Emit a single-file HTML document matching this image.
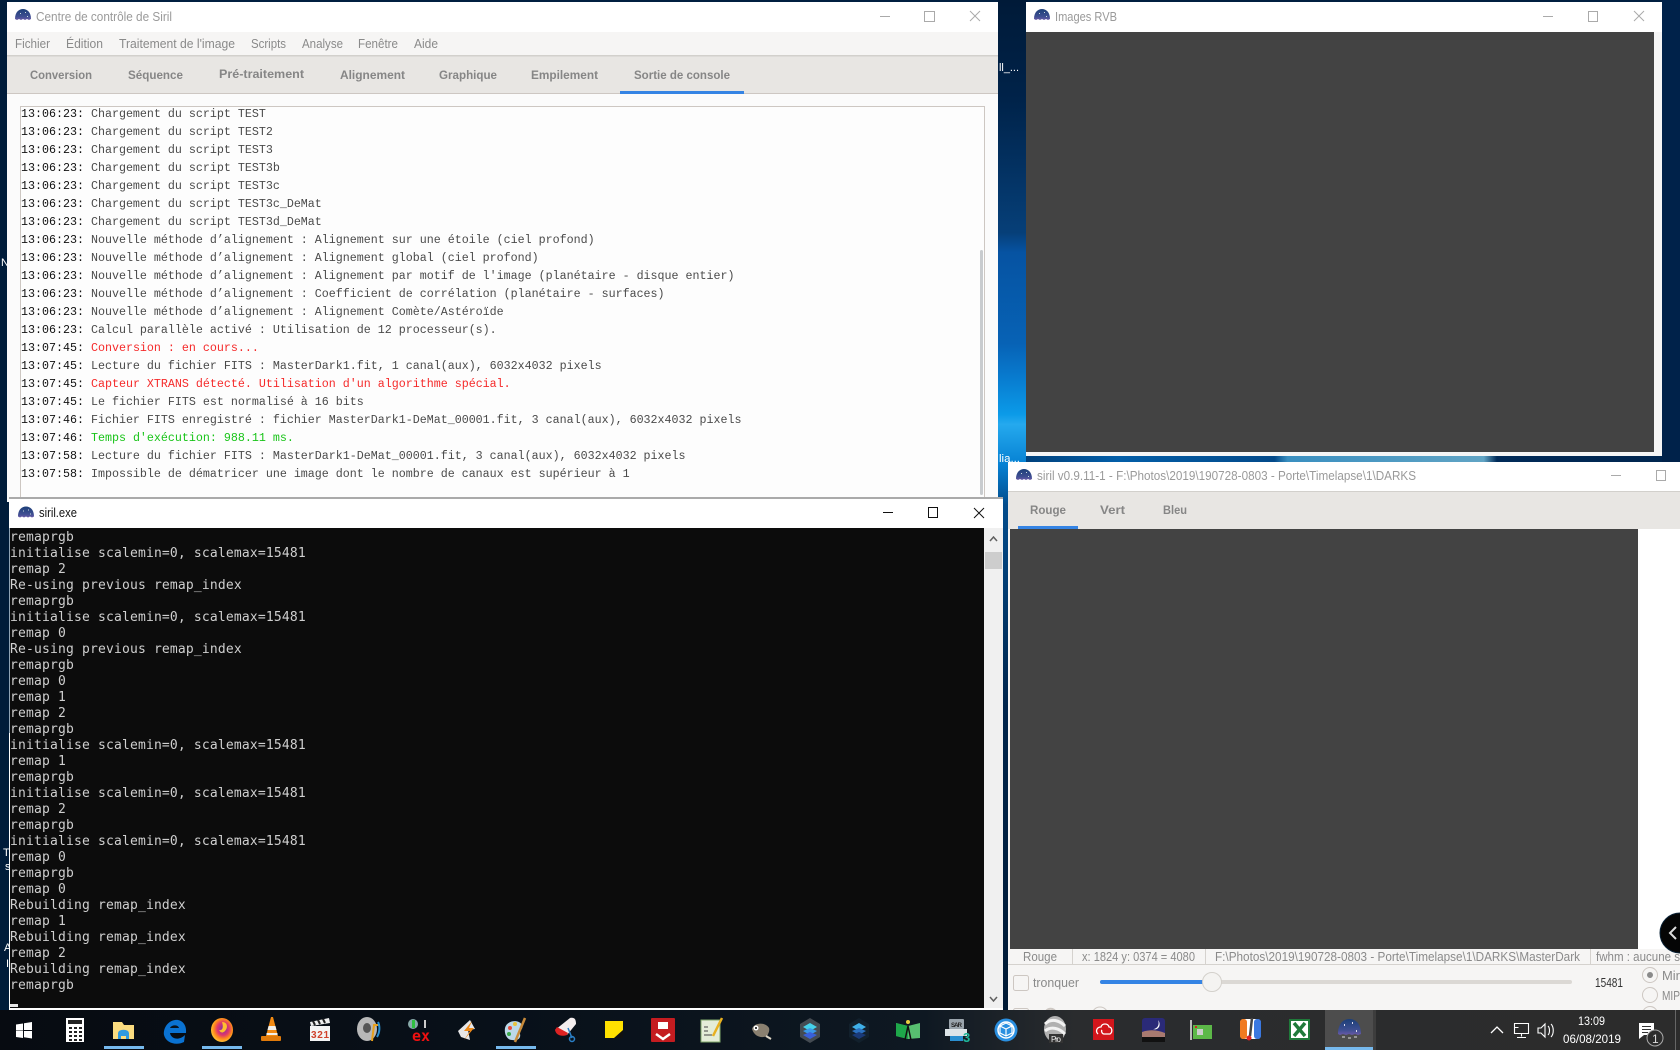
<!DOCTYPE html>
<html lang="fr"><head><meta charset="utf-8"><title>Siril</title>
<style>
html,body{margin:0;padding:0;background:#001a35;overflow:hidden}
body{width:1680px;height:1050px;position:relative}
svg{position:absolute;left:0;top:0;display:block}
text{font-family:"Liberation Sans",sans-serif;font-size:12.5px;fill:#8f8f8f}
.tab{font-weight:bold;font-size:12px;fill:#868686}
.men{font-size:12.5px;fill:#8a8a8a}
.ttl{font-size:12.5px;fill:#9a9a9a}
.st{font-size:12.5px;fill:#8a8a8a}
.tray{font-size:12px;fill:#fff}
.dk{font-size:11px;fill:#fff}
pre{position:absolute;margin:0;white-space:pre}
#log{left:21px;top:105px;font:11.67px/18px "Liberation Mono",monospace;color:#4a4a4a}
#log b{font-weight:normal;color:#111}
#log i{font-style:normal;color:#f52a2a}
#log u{text-decoration:none;color:#19c419}
#con{left:10px;top:530px;font:13px/16px "DejaVu Sans Mono",monospace;letter-spacing:.17px;color:#cfcfcf}
</style></head><body>
<svg width="1680" height="1050" viewBox="0 0 1680 1050" xmlns="http://www.w3.org/2000/svg">
<defs>
<linearGradient id="sky" x1="0" y1="0" x2="0" y2="1">
<stop offset="0" stop-color="#001a38"/><stop offset=".1" stop-color="#00234a"/><stop offset=".23" stop-color="#063f78"/><stop offset=".25" stop-color="#0653a2"/><stop offset=".34" stop-color="#0762b5"/><stop offset=".37" stop-color="#0878cc"/><stop offset=".41" stop-color="#0b9ae8"/><stop offset=".42" stop-color="#25a9ee"/><stop offset=".46" stop-color="#0681d3"/><stop offset=".5" stop-color="#024c8c"/><stop offset=".7" stop-color="#00254c"/><stop offset="1" stop-color="#001a35"/>
</linearGradient>
<linearGradient id="band" x1="0" y1="0" x2="1" y2="0">
<stop offset="0" stop-color="#00417c"/><stop offset=".14" stop-color="#035ea8"/><stop offset=".38" stop-color="#034a8a"/><stop offset=".4" stop-color="#3a8fc0"/><stop offset=".7" stop-color="#61a4c4"/><stop offset=".72" stop-color="#002a58"/><stop offset="1" stop-color="#00254e"/>
</linearGradient>
<linearGradient id="bar" x1="0" y1="0" x2="1" y2="0">
<stop offset="0" stop-color="#070b11"/><stop offset=".3" stop-color="#081019"/><stop offset=".55" stop-color="#0e1822"/><stop offset=".64" stop-color="#2a2c2e"/><stop offset="1" stop-color="#2c2c2c"/>
</linearGradient>
<linearGradient id="dome" x1="0" y1="0" x2="0" y2="1">
<stop offset="0" stop-color="#1c3f78"/><stop offset=".7" stop-color="#3f4f92"/><stop offset="1" stop-color="#6a5aa8"/>
</linearGradient>
<radialGradient id="ff" cx=".55" cy=".45" r=".6">
<stop offset="0" stop-color="#7a2fa8"/><stop offset=".45" stop-color="#e0386a"/><stop offset=".7" stop-color="#ff8a1c"/><stop offset="1" stop-color="#ffd23a"/>
</radialGradient>
<symbol id="sr" viewBox="0 0 16 12" overflow="visible">
<path d="M0 10C0 3 4 0 8 0s8 3 8 10l-2 1-2-1-2 1-2-1-2 1-2-1-2 1z" fill="url(#dome)"/>
<rect x="5" y="4" width="1" height="1" fill="#cdd"/><rect x="10" y="3" width="1" height="1" fill="#cdd"/><rect x="12" y="7" width="1" height="1" fill="#cdd"/>
</symbol>
</defs>

<!-- desktop -->
<rect width="1680" height="1050" fill="#001f40"/>
<rect x="998" y="0" width="30" height="1010" fill="url(#sky)"/>
<rect x="1026" y="456" width="654" height="6" fill="url(#band)"/>
<rect x="1662" y="0" width="18" height="462" fill="#00224a"/>
<rect x="0" y="0" width="9" height="1010" fill="#001c3a"/>
<text class="dk" x="999" y="71" textLength="20" lengthAdjust="spacingAndGlyphs">ll_...</text>
<text class="dk" x="999" y="462" textLength="21" lengthAdjust="spacingAndGlyphs">lia...</text>
<text class="dk" x="1" y="266">N</text><text class="dk" x="3" y="856">T</text><text class="dk" x="5" y="870">s</text><text class="dk" x="4" y="951">A</text><text class="dk" x="6" y="967">I</text>

<!-- main window -->
<rect x="7" y="2" width="991" height="500" fill="#fbfbfb"/>
<rect x="7" y="2" width="991" height="30" fill="#fff"/>
<use href="#sr" x="15" y="9" width="16" height="12"/>
<text class="ttl" x="36" y="21" textLength="136" lengthAdjust="spacingAndGlyphs">Centre de contrôle de Siril</text>
<path d="M880 16.5h10" stroke="#aaa" stroke-width="1"/>
<rect x="924.500" y="11.500" width="10" height="10" fill="none" stroke="#aaa"/>
<path d="M970 11l10 10M980 11l-10 10" stroke="#aaa"/>
<rect x="7" y="32" width="991" height="23" fill="#f6f5f4"/>
<text class="men" x="15" y="48" textLength="35" lengthAdjust="spacingAndGlyphs">Fichier</text>
<text class="men" x="66" y="48" textLength="37" lengthAdjust="spacingAndGlyphs">Édition</text>
<text class="men" x="119" y="48" textLength="116" lengthAdjust="spacingAndGlyphs">Traitement de l'image</text>
<text class="men" x="251" y="48" textLength="35" lengthAdjust="spacingAndGlyphs">Scripts</text>
<text class="men" x="302" y="48" textLength="41" lengthAdjust="spacingAndGlyphs">Analyse</text>
<text class="men" x="358" y="48" textLength="40" lengthAdjust="spacingAndGlyphs">Fenêtre</text>
<text class="men" x="414" y="48" textLength="24" lengthAdjust="spacingAndGlyphs">Aide</text>
<rect x="7" y="55" width="991" height="39" fill="#e8e6e3"/>
<rect x="7" y="55" width="991" height="1.500" fill="#d2d0cc"/>
<rect x="7" y="93" width="991" height="1" fill="#cdc7c2"/>
<rect x="620" y="91" width="124" height="3" fill="#3584e4"/>
<text class="tab" x="30" y="79" textLength="62" lengthAdjust="spacingAndGlyphs">Conversion</text>
<text class="tab" x="128" y="79" textLength="55" lengthAdjust="spacingAndGlyphs">Séquence</text>
<text class="tab" x="219" y="78" textLength="85" lengthAdjust="spacingAndGlyphs">Pré-traitement</text>
<text class="tab" x="340" y="79" textLength="65" lengthAdjust="spacingAndGlyphs">Alignement</text>
<text class="tab" x="439" y="79" textLength="58" lengthAdjust="spacingAndGlyphs">Graphique</text>
<text class="tab" x="531" y="79" textLength="67" lengthAdjust="spacingAndGlyphs">Empilement</text>
<text class="tab" x="634" y="79" textLength="96" lengthAdjust="spacingAndGlyphs">Sortie de console</text>
<rect x="20.500" y="106.500" width="964" height="400" fill="#fdfdfd" stroke="#cdc7c2"/>
<rect x="980" y="250" width="3" height="245" rx="1.500" fill="#c8cbce"/>

<!-- RGB window -->
<rect x="1026" y="2" width="636" height="454" fill="#f5f5f5"/>
<rect x="1026" y="2" width="636" height="30" fill="#fff"/>
<use href="#sr" x="1034" y="9" width="16" height="12"/>
<text class="ttl" x="1055" y="21" textLength="62" lengthAdjust="spacingAndGlyphs">Images RVB</text>
<path d="M1543 16.500h10" stroke="#aaa"/>
<rect x="1588.500" y="11.500" width="9" height="10" fill="none" stroke="#aaa"/>
<path d="M1634 11l10 10M1644 11l-10 10" stroke="#aaa"/>
<rect x="1026" y="32" width="628" height="420" fill="#434343"/>

<!-- siril window -->
<rect x="1008" y="462" width="672" height="548" fill="#f6f5f4"/>
<rect x="1008" y="462" width="672" height="29" fill="#fff"/>
<use href="#sr" x="1016" y="469" width="16" height="12"/>
<text class="ttl" x="1037" y="480" textLength="379" lengthAdjust="spacingAndGlyphs">siril v0.9.11-1 - F:\Photos\2019\190728-0803 - Porte\Timelapse\1\DARKS</text>
<path d="M1611 475.500h10" stroke="#aaa"/>
<rect x="1656.500" y="470.500" width="9" height="10" fill="none" stroke="#aaa"/>
<rect x="1008" y="491" width="672" height="38" fill="#e8e6e3"/>
<rect x="1008" y="491" width="672" height="1" fill="#d2d0cc"/>
<rect x="1638" y="529" width="42" height="420" fill="#fff"/>
<rect x="1018" y="526" width="60" height="3" fill="#3584e4"/>
<text class="tab" x="1030" y="514" textLength="36" lengthAdjust="spacingAndGlyphs">Rouge</text>
<text class="tab" x="1100" y="514" textLength="25" lengthAdjust="spacingAndGlyphs">Vert</text>
<text class="tab" x="1163" y="514" textLength="24" lengthAdjust="spacingAndGlyphs">Bleu</text>
<rect x="1010" y="529" width="628" height="420" fill="#434343"/>
<rect x="1008" y="964" width="672" height="1" fill="#d5d2ce"/>
<path d="M1072.500 949v15M1205.500 949v15M1590.500 949v15" stroke="#d5d2ce"/>
<text class="st" x="1023" y="961" textLength="34" lengthAdjust="spacingAndGlyphs">Rouge</text>
<text class="st" x="1082" y="961" textLength="113" lengthAdjust="spacingAndGlyphs">x: 1824 y: 0374 = 4080</text>
<text class="st" x="1215" y="961" textLength="365" lengthAdjust="spacingAndGlyphs">F:\Photos\2019\190728-0803 - Porte\Timelapse\1\DARKS\MasterDark</text>
<text class="st" x="1596" y="961" textLength="84" lengthAdjust="spacingAndGlyphs">fwhm : aucune s</text>
<rect x="1013.500" y="975.500" width="15" height="15" rx="2" fill="#f6f5f4" stroke="#cdc7c2"/>
<text class="st" x="1033" y="987" textLength="46" lengthAdjust="spacingAndGlyphs">tronquer</text>
<rect x="1100" y="980" width="472" height="4" rx="2" fill="#dbd8d4"/>
<rect x="1100" y="980" width="110" height="4" rx="2" fill="#3584e4"/>
<circle cx="1212" cy="982" r="9.500" fill="#f4f3f1" stroke="#d3d0cb"/>
<text x="1595" y="987" textLength="28" lengthAdjust="spacingAndGlyphs" style="fill:#333;font-size:12.5px">15481</text>
<circle cx="1650" cy="975" r="7.500" fill="#f6f5f4" stroke="#cdc7c2"/><circle cx="1650" cy="975" r="3" fill="#8a8a8a"/>
<circle cx="1650" cy="995" r="7.500" fill="#f6f5f4" stroke="#cdc7c2"/>
<circle cx="1650" cy="1014" r="7.500" fill="#f6f5f4" stroke="#cdc7c2"/>
<text class="st" x="1662" y="980" textLength="18" lengthAdjust="spacingAndGlyphs">Mir</text>
<text class="st" x="1662" y="1000" textLength="18" lengthAdjust="spacingAndGlyphs">MIP</text>
<rect x="1013.500" y="1008.500" width="15" height="15" rx="2" fill="#f6f5f4" stroke="#cdc7c2"/>
<path d="M1045 1015c0-8 10-8 11 -2" fill="none" stroke="#cdc7c2" stroke-width="2"/>
<circle cx="1100" cy="1015" r="8" fill="#f6f5f4" stroke="#cdc7c2"/>
<circle cx="1680" cy="933" r="20" fill="#050505" stroke="#0a2236"/>
<path d="M1676 927l-6 6 6 6" fill="none" stroke="#ddd" stroke-width="2"/>

<!-- console window -->
<rect x="9" y="497" width="994" height="513" fill="#fff"/>
<rect x="9" y="497.500" width="994" height="1" fill="#555"/>
<use href="#sr" x="18" y="505" width="16" height="15"/>
<text x="39" y="517" textLength="38" lengthAdjust="spacingAndGlyphs" style="fill:#111;font-size:12.5px">siril.exe</text>
<path d="M883 512.500h10" stroke="#111"/>
<rect x="928.500" y="507.500" width="9" height="10" fill="none" stroke="#111"/>
<path d="M974 508l10 10M984 508l-10 10" stroke="#111"/>
<rect x="10" y="528" width="974" height="480" fill="#0c0c0c"/>
<rect x="984" y="528" width="19" height="480" fill="#f0f0f0"/>
<rect x="985" y="552" width="17" height="17" fill="#cdcdcd"/>
<path d="M990 541l3.500-4 3.500 4M990 997l3.500 4 3.500-4" fill="none" stroke="#606060" stroke-width="1.500"/>
<rect x="10" y="1004" width="8" height="3" fill="#e8e8e8"/>
<rect x="9" y="528" width="1" height="205" fill="#8fa3b5"/>

<!-- taskbar -->
<rect x="0" y="1010" width="1680" height="40" fill="url(#bar)"/>
<rect x="1325" y="1010" width="48" height="40" fill="#4d4d4d"/>
<rect x="1373" y="1010" width="3" height="40" fill="#3d3d3d"/>
<path d="M104 1047.500h40M202 1047.500h40M496 1047.500h40" stroke="#76b9ed" stroke-width="3"/>
<rect x="1325" y="1047" width="48" height="3" fill="#76b9ed"/>

<!-- windows -->
<path d="M16 1024.500l7-1v7h-7zM24 1023.300l8-1.300v8h-8zM16 1031h7v7l-7-1zM24 1031h8v7.500l-8-1.200z" fill="#fff"/>
<!-- calc -->
<rect x="66" y="1018" width="18" height="24" fill="#fff"/><rect x="68" y="1020" width="14" height="4" fill="#222"/>
<path d="M69 1028h3M74 1028h3M79 1028h3M69 1032h3M74 1032h3M79 1032h3M69 1036h3M74 1036h3M79 1036h3M69 1040h3M74 1040h3M79 1040h3" stroke="#222" stroke-width="2"/>
<!-- explorer -->
<path d="M113 1022h9l2 3h10v14h-21z" fill="#fbdc7f"/><path d="M118 1039v-6a5 3 0 0 1 11 0v6h-3v-3h-5v3z" fill="#2f9ae0"/>
<!-- edge -->
<path d="M185 1035c-6 6-14 4-15-2h16c1-9-5-14-11-13-7 1-12 8-11 15 2 8 12 11 20 7z" fill="#0a72d2"/><path d="M170 1028c1-3 8-4 9 0z" fill="#07121e"/>
<!-- firefox -->
<ellipse cx="222" cy="1030" rx="11" ry="12" fill="url(#ff)"/><path d="M222 1022c6 0 6 6 3 9-3 3-5 1-6-1 3 1 5-2 3-8z" fill="#ffbe2e"/>
<!-- vlc -->
<path d="M266 1036l5-19h2l5 19z" fill="#f28a12"/><path d="M268.500 1026h7l1 4h-9zM266.500 1033h11v2h-11z" fill="#f2f0ea"/><rect x="261" y="1036" width="20" height="5" rx="1" fill="#e07a0a"/>
<!-- mpc -->
<rect x="310" y="1026" width="20" height="15" fill="#f4f4f4"/><path d="M310 1022l19-4 1 5-19 3z" fill="#eee"/><path d="M313 1021l2 4M318 1020l2 4M323 1019l2 4" stroke="#222" stroke-width="2"/>
<text x="311" y="1038" style="font-size:10px;font-weight:bold;fill:#d0402a" textLength="18">321</text>
<!-- reel -->
<ellipse cx="367" cy="1029" rx="10" ry="12" fill="#b8b8b8"/><ellipse cx="367" cy="1028" rx="4" ry="5" fill="#555"/><path d="M372 1041l2-16h6" fill="none" stroke="#e8a01a" stroke-width="2"/><path d="M378 1022c2 4 2 10-1 15" fill="none" stroke="#2a8fd0" stroke-width="2"/>
<!-- ex -->
<circle cx="413" cy="1024" r="5" fill="#8aa"/><rect x="412" y="1020" width="3" height="8" fill="#2fbf3f"/><path d="M425 1020v8" stroke="#ccc" stroke-width="2"/>
<text x="412" y="1041" style="font-size:15px;font-family:'DejaVu Sans Mono',monospace;font-weight:bold;fill:#f01010" textLength="18" lengthAdjust="spacingAndGlyphs">ex</text>
<!-- winamp -->
<path d="M458 1031l12-11 5 9-7 1 2 10-9-3z" fill="#e8e8e8"/><path d="M472 1021l-8 10h6l-6 9 10-12h-5z" fill="#f08a18"/>
<!-- paint -->
<path d="M505 1028c2-8 14-9 17-3 2 4-3 5-2 9s-2 7-8 6c-5 0-8-6-7-12z" fill="#bcd8e8"/><circle cx="510" cy="1028" r="2" fill="#e84a3a"/><circle cx="515" cy="1024" r="2" fill="#e8c23a"/><circle cx="509" cy="1034" r="2" fill="#3aa84a"/><path d="M515 1042l10-24" stroke="#c88a3a" stroke-width="2.500"/>
<!-- snip -->
<path d="M555 1030l15-12c5-1 6 2 6 6l-9 11z" fill="#f4eeee"/><path d="M555 1030c1 5 6 7 12 5l1-2-11-6z" fill="#d22"/><circle cx="572" cy="1039" r="2.500" fill="none" stroke="#2a80c8" stroke-width="1.500"/><path d="M568 1028l4 10" stroke="#2a80c8" stroke-width="1.500"/>
<!-- sticky -->
<rect x="605" y="1021" width="18" height="17" fill="#ffe100"/><path d="M614 1038l9-8v8z" fill="#111"/>
<!-- red video -->
<rect x="651" y="1018" width="24" height="24" rx="1" fill="#c41c20"/><rect x="658" y="1022" width="10" height="7" fill="#fff"/><path d="M656 1034l7 5 7-5" fill="none" stroke="#fff" stroke-width="2.500"/>
<!-- notepad -->
<rect x="701" y="1020" width="19" height="22" fill="#e4edd8" stroke="#7fa86a"/><path d="M704 1027h4M704 1031h4M704 1035h8" stroke="#444"/><path d="M713 1036l9-18" stroke="#e8b020" stroke-width="2.500"/>
<!-- gimp -->
<path d="M752 1029c2-7 14-7 17-1 1 3-1 6-2 8-4 2-12 2-15-7z" fill="#8a8070"/><circle cx="756" cy="1028" r="2.500" fill="#fff"/><circle cx="756" cy="1028" r="1" fill="#000"/><path d="M766 1036l5 3" stroke="#e0d8c8" stroke-width="2"/>
<!-- hex 1 -->
<path d="M810 1018l10 6v13l-10 6-10-6v-13z" fill="#444b52"/><path d="M810 1023l7 4-7 4-7-4z" fill="#45d0e8"/><path d="M803 1031l7 4 7-4-7-3z" fill="#3a98e8"/><path d="M803 1035l7 4 7-4-7-3z" fill="#3a60d8"/>
<!-- hex 2 -->
<path d="M859 1018l10 6v13l-10 6-10-6v-13z" fill="#12202c"/><path d="M859 1023l7 4-7 4-7-4z" fill="#3fb0e8"/><path d="M852 1031l7 4 7-4-7-3z" fill="#2a70c0"/><path d="M852 1035l7 4 7-4-7-3z" fill="#1a3a78"/>
<!-- green map -->
<path d="M896 1023l12 3 12-3v15l-12 1-12-3z" fill="#58c070"/><path d="M896 1023l12 3v13l-12-3z" fill="#1ea84a"/><path d="M905 1040l3-14 3 14" stroke="#111" stroke-width="1.500" fill="none"/><circle cx="908" cy="1022" r="2" fill="#e8d040"/>
<!-- SAR -->
<rect x="949" y="1019" width="15" height="10" rx="1" fill="#9aa4ac"/><text x="951" y="1027" style="font-size:6px;font-weight:bold;fill:#222" textLength="11">SAR</text><rect x="945" y="1029" width="22" height="7" fill="#dde4e8"/><rect x="950" y="1036" width="13" height="5" fill="#2a8fd0"/><text x="963" y="1042" style="font-size:13px;font-weight:bold;fill:#1fb89a">3</text>
<!-- blue circle -->
<circle cx="1006" cy="1030" r="11.500" fill="#2a8fe0"/><circle cx="1006" cy="1030" r="8" fill="none" stroke="#fff" stroke-width="1.500"/><path d="M1000 1026l6-3 6 3v7l-6 3-6-3zM1000 1026l6 3 6-3M1006 1029v7" fill="none" stroke="#fff" stroke-width="1.200"/>
<!-- earth -->
<ellipse cx="1055" cy="1029" rx="11" ry="13" fill="#b0b0b0"/><path d="M1045 1024c6-6 14-4 20 2M1045 1031c6-5 14-3 20 3" fill="none" stroke="#f2f2f2" stroke-width="3"/><rect x="1049" y="1034" width="14" height="9" fill="#333"/><text x="1051" y="1042" style="font-size:8px;fill:#eee" textLength="10">Pro</text>
<!-- adobe -->
<rect x="1093" y="1019" width="21" height="21" fill="#d2161c"/><path d="M1098 1034c-3-3-1-7 3-7 1-4 7-4 8 0 3 0 4 5 1 7h-6c-2 0-3-3-2-4" fill="none" stroke="#fff" stroke-width="1.300"/>
<!-- stellarium -->
<rect x="1142" y="1018" width="23" height="21" rx="3" fill="#2a2a78"/><path d="M1142 1032c8-3 16-2 23 1v4h-23z" fill="#a87a70"/><rect x="1142" y="1037" width="23" height="5" fill="#111"/><path d="M1158 1020c2 5-1 9-5 9 5 2 9-4 5-9z" fill="#fff"/>
<!-- nic -->
<path d="M1191 1020v20" stroke="#bbb" stroke-width="2"/><rect x="1193" y="1025" width="19" height="14" fill="#5cb848"/><rect x="1197" y="1029" width="6" height="6" fill="#ccc"/><rect x="1195" y="1026" width="2" height="2" fill="#d22"/>
<!-- thermo -->
<rect x="1240" y="1019" width="21" height="20" rx="4" fill="#fff"/><rect x="1240" y="1019" width="7" height="20" rx="3" fill="#f07a20"/><rect x="1254" y="1019" width="7" height="20" rx="3" fill="#3a78e0"/><path d="M1252 1018l-2 18" stroke="#444" stroke-width="2.500"/><circle cx="1249" cy="1038" r="2.500" fill="#d22"/>
<!-- excel -->
<rect x="1289" y="1019" width="21" height="21" fill="#1f7a3a"/><rect x="1291" y="1021" width="17" height="17" fill="#fff"/><path d="M1294 1023l11 13M1305 1023l-11 13" stroke="#1f7a3a" stroke-width="3.500"/>
<!-- siril task -->
<path d="M1338 1034c0-10 5-15 11.500-15s11.500 5 11.500 15l-3 1-3-1-3 1-3-1-3 1-3-1-3 1z" fill="url(#dome)"/>
<path d="M1342 1037h3M1348 1038h3M1354 1037h3" stroke="#ddd"/><rect x="1344" y="1024" width="1" height="2" fill="#dde"/><rect x="1352" y="1022" width="1" height="2" fill="#dde"/><rect x="1356" y="1030" width="1" height="2" fill="#dde"/>

<!-- tray -->
<path d="M1491 1033l6-6 6 6" fill="none" stroke="#fff" stroke-width="1.300"/>
<path d="M1514.500 1023.500h14v10h-14zM1521.500 1033.500v3M1517 1037.500h9M1514.500 1027.500h4" fill="none" stroke="#fff" stroke-width="1.100"/>
<path d="M1538 1028h3l4-4v13l-4-4h-3z" fill="none" stroke="#fff" stroke-width="1.100"/><path d="M1548 1026c2 2 2 7 0 9M1551 1024c3 3 3 10 0 13" fill="none" stroke="#fff" stroke-width="1.100"/>
<text class="tray" x="1578" y="1025" textLength="27" lengthAdjust="spacingAndGlyphs">13:09</text>
<text class="tray" x="1563" y="1043" textLength="58" lengthAdjust="spacingAndGlyphs">06/08/2019</text>
<path d="M1639 1023h15v12h-10l-5 4z" fill="#fff"/><path d="M1642 1026.500h9M1642 1029.500h9M1642 1032.500h6" stroke="#333"/>
<circle cx="1655" cy="1038" r="8" fill="#2c2c2c" stroke="#aaa" stroke-width="1"/><text x="1652" y="1043" style="font-size:12px;fill:#ddd">1</text>
<rect x="1675" y="1010" width="1" height="40" fill="#666"/>
</svg>

<pre id="log"><b>13:06:23:</b> Chargement du script TEST
<b>13:06:23:</b> Chargement du script TEST2
<b>13:06:23:</b> Chargement du script TEST3
<b>13:06:23:</b> Chargement du script TEST3b
<b>13:06:23:</b> Chargement du script TEST3c
<b>13:06:23:</b> Chargement du script TEST3c_DeMat
<b>13:06:23:</b> Chargement du script TEST3d_DeMat
<b>13:06:23:</b> Nouvelle méthode d’alignement : Alignement sur une étoile (ciel profond)
<b>13:06:23:</b> Nouvelle méthode d’alignement : Alignement global (ciel profond)
<b>13:06:23:</b> Nouvelle méthode d’alignement : Alignement par motif de l'image (planétaire - disque entier)
<b>13:06:23:</b> Nouvelle méthode d’alignement : Coefficient de corrélation (planétaire - surfaces)
<b>13:06:23:</b> Nouvelle méthode d’alignement : Alignement Comète/Astéroïde
<b>13:06:23:</b> Calcul parallèle activé : Utilisation de 12 processeur(s).
<b>13:07:45:</b> <i>Conversion : en cours...</i>
<b>13:07:45:</b> Lecture du fichier FITS : MasterDark1.fit, 1 canal(aux), 6032x4032 pixels
<b>13:07:45:</b> <i>Capteur XTRANS détecté. Utilisation d'un algorithme spécial.</i>
<b>13:07:45:</b> Le fichier FITS est normalisé à 16 bits
<b>13:07:46:</b> Fichier FITS enregistré : fichier MasterDark1-DeMat_00001.fit, 3 canal(aux), 6032x4032 pixels
<b>13:07:46:</b> <u>Temps d'exécution: 988.11 ms.</u>
<b>13:07:58:</b> Lecture du fichier FITS : MasterDark1-DeMat_00001.fit, 3 canal(aux), 6032x4032 pixels
<b>13:07:58:</b> Impossible de dématricer une image dont le nombre de canaux est supérieur à 1</pre>

<pre id="con">remaprgb
initialise scalemin=0, scalemax=15481
remap 2
Re-using previous remap_index
remaprgb
initialise scalemin=0, scalemax=15481
remap 0
Re-using previous remap_index
remaprgb
remap 0
remap 1
remap 2
remaprgb
initialise scalemin=0, scalemax=15481
remap 1
remaprgb
initialise scalemin=0, scalemax=15481
remap 2
remaprgb
initialise scalemin=0, scalemax=15481
remap 0
remaprgb
remap 0
Rebuilding remap_index
remap 1
Rebuilding remap_index
remap 2
Rebuilding remap_index
remaprgb</pre>
</body></html>
